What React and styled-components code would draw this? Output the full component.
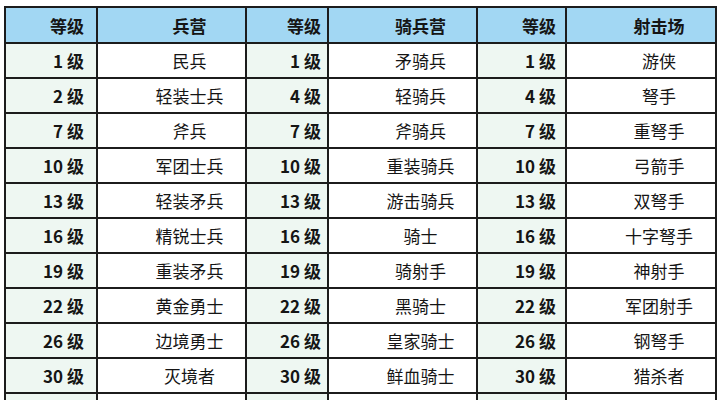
import styled, { createGlobalStyle } from 'styled-components';

const GlobalStyle = createGlobalStyle`
  body {
    margin: 0;
    background: #fff;
    font-family: "Noto Sans CJK SC", "Noto Sans", sans-serif;
    color: #151515;
  }
`;

const Page = styled.div`
  padding: 6px 0 0 4px;
  height: 400px;
  overflow: hidden;
`;

const Table = styled.table`
  border-collapse: collapse;
  table-layout: fixed;
  width: 713px;
  border: 2px solid #1c1c1c;
`;

const HeadCell = styled.th`
  background: #a2d7f3;
  height: 34px;
  padding: 0;
  border: 2px solid #1c1c1c;
  font-size: 17px;
  font-weight: 700;
  text-align: ${p => (p.$level ? 'right' : 'center')};
  padding-right: ${p => (p.$level ? `${p.$pad}px` : '0')};
  padding-left: ${p => (p.$level ? '0' : '36px')};
`;

const Cell = styled.td`
  height: 33px;
  padding: 0;
  border: 2px solid #1c1c1c;
  font-size: 17px;
  background: ${p => (p.$level ? '#eef7f2' : '#fff')};
  font-weight: ${p => (p.$level ? 700 : 400)};
  text-align: ${p => (p.$level ? 'right' : 'center')};
  padding-right: ${p => (p.$level ? `${p.$pad}px` : '0')};
  padding-left: ${p => (p.$level ? '0' : '36px')};
  white-space: nowrap;
`;

const cols = [92, 149, 82, 149, 89, 150];
const pads = [12, 6, 9];

const headers = ['兵营', '骑兵营', '射击场'];

const rows = [
  [['1 级', '民兵'], ['1 级', '矛骑兵'], ['1 级', '游侠']],
  [['2 级', '轻装士兵'], ['4 级', '轻骑兵'], ['4 级', '弩手']],
  [['7 级', '斧兵'], ['7 级', '斧骑兵'], ['7 级', '重弩手']],
  [['10 级', '军团士兵'], ['10 级', '重装骑兵'], ['10 级', '弓箭手']],
  [['13 级', '轻装矛兵'], ['13 级', '游击骑兵'], ['13 级', '双弩手']],
  [['16 级', '精锐士兵'], ['16 级', '骑士'], ['16 级', '十字弩手']],
  [['19 级', '重装矛兵'], ['19 级', '骑射手'], ['19 级', '神射手']],
  [['22 级', '黄金勇士'], ['22 级', '黑骑士'], ['22 级', '军团射手']],
  [['26 级', '边境勇士'], ['26 级', '皇家骑士'], ['26 级', '钢弩手']],
  [['30 级', '灭境者'], ['30 级', '鲜血骑士'], ['30 级', '猎杀者']],
  [['', ''], ['', ''], ['', '']],
];

const App = () => (
  <>
    <GlobalStyle />
    <Page>
      <Table>
        <colgroup>
          {cols.map((w, i) => (
            <col key={i} style={{ width: w }} />
          ))}
        </colgroup>
        <thead>
          <tr>
            {headers.map((h, i) => [
              <HeadCell key={`l${i}`} $level $pad={pads[i]}>等级</HeadCell>,
              <HeadCell key={`n${i}`}>{h}</HeadCell>,
            ])}
          </tr>
        </thead>
        <tbody>
          {rows.map((row, r) => (
            <tr key={r}>
              {row.map(([lv, name], i) => [
                <Cell key={`l${i}`} $level $pad={pads[i]}>{lv}</Cell>,
                <Cell key={`n${i}`}>{name}</Cell>,
              ])}
            </tr>
          ))}
        </tbody>
      </Table>
    </Page>
  </>
);

export default App;
